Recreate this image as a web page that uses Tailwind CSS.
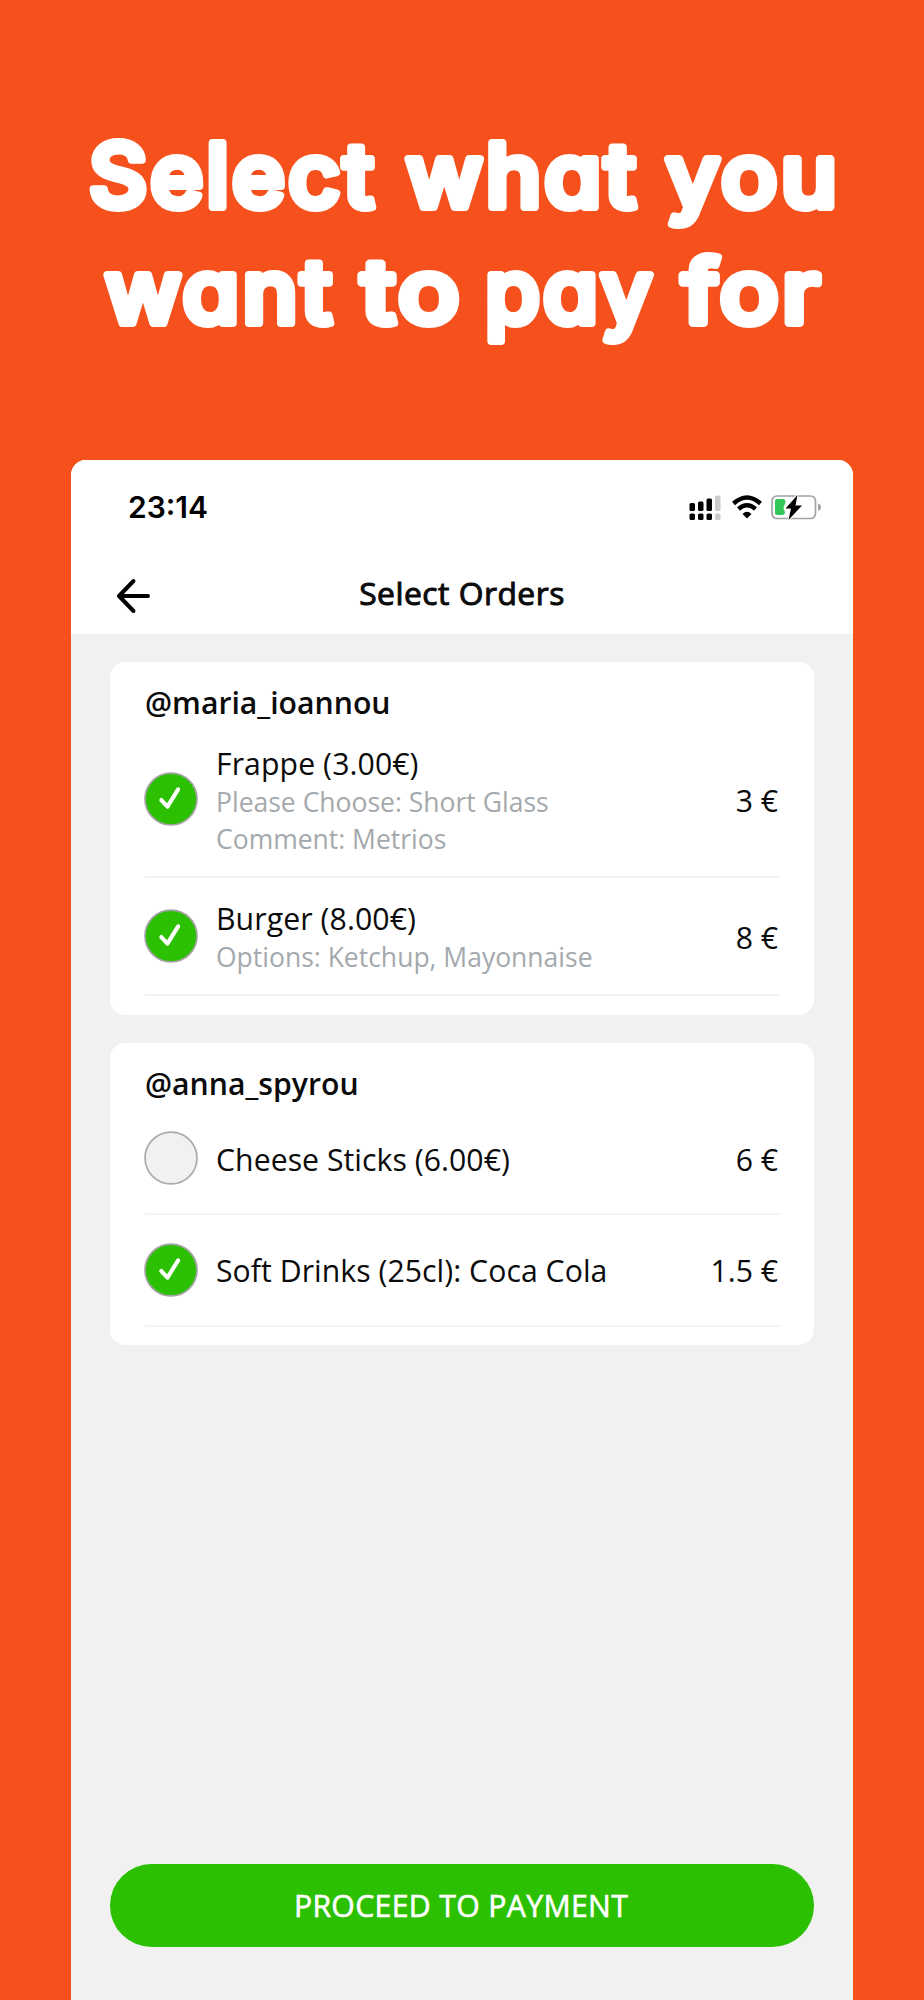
<!DOCTYPE html>
<html lang="en">
<head>
<meta charset="utf-8">
<title>Select Orders</title>
<script src="https://cdn.jsdelivr.net/npm/@tailwindcss/browser@4"></script>
</head>
<body class="bg-[#f6511d]">
<main class="flex h-[2000px] w-[924px] flex-col overflow-hidden bg-[#f6511d] font-['Open_Sans',sans-serif] text-[30.200px] text-[#0b0b0b]">
  <h1 class="h-[460px] shrink-0">
    <svg width="924" height="460" viewBox="0 0 924 460" class="fill-white stroke-white stroke-[8px] font-['Inter',sans-serif] text-[88px] font-medium tracking-[3px] [font-feature-settings:'cv11'] [stroke-linejoin:round]">
      <text x="89" y="206.500" textLength="288" lengthAdjust="spacingAndGlyphs">Select</text>
      <text x="406" y="206.500" textLength="233" lengthAdjust="spacingAndGlyphs">what</text>
      <text x="666" y="206.500" textLength="174" lengthAdjust="spacingAndGlyphs">you</text>
      <text x="105" y="322.500" textLength="230" lengthAdjust="spacingAndGlyphs">want</text>
      <text x="361" y="322.500" textLength="102" lengthAdjust="spacingAndGlyphs">to</text>
      <text x="485" y="322.500" textLength="170" lengthAdjust="spacingAndGlyphs">pay</text>
      <text x="682" y="322.500" textLength="141" lengthAdjust="spacingAndGlyphs">for</text>
    </svg>
  </h1>
  <section class="mx-[71px] flex grow flex-col overflow-hidden rounded-t-[15px] bg-[#f1f1f1]">
    <header class="h-[174px] shrink-0 bg-white">
      <div class="flex h-[94px] items-center justify-between pr-[31px] pl-[57px]">
        <span class="font-['Inter',sans-serif] text-[30px] font-semibold text-black">23:14</span>
        <svg width="133" height="26" viewBox="0 0 133 26" fill="none">
          <g fill="#000"><rect x="0.500" y="9" width="5.500" height="8" rx="1.500"/><rect x="9" y="7.500" width="5.500" height="9.500" rx="1.500"/><rect x="17.500" y="4.500" width="5.500" height="12.500" rx="1.500"/><rect x="0.500" y="19.500" width="5.500" height="6.500" rx="1.500"/><rect x="9" y="19.500" width="5.500" height="6.500" rx="1.500"/><rect x="17.500" y="19.500" width="5.500" height="6.500" rx="1.500"/></g>
          <g fill="#ccc"><rect x="26" y="1.500" width="5.500" height="15.500" rx="1.500"/><rect x="26" y="19.500" width="5.500" height="6.500" rx="1.500"/></g>
          <path d="M44.500 9.500Q58 -2.500 71.500 9.500M49.500 15Q58 7.500 66.500 15" stroke="#000" stroke-width="4.500"/>
          <path d="M53.500 20Q58 15.500 62.500 20L58 24.500Z" fill="#000"/>
          <rect x="83" y="2" width="43.500" height="22.500" rx="5" stroke="#a3a3a3" stroke-width="1.700"/>
          <path d="M129 9.500Q132 10.500 132 13.300T129 17Z" fill="#a3a3a3"/>
          <path d="M88 5H94Q96.500 5 96.500 8L94.500 14 96 18Q96 21 93 21H88Q86 21 86 19V7Q86 5 88 5Z" fill="#35c759"/>
          <path d="M108.500 1 96.500 14.500H102L99.500 26 113 11.500H106.500Z" fill="#000" stroke="#fff" stroke-width="2" paint-order="stroke"/>
        </svg>
      </div>
      <div class="grid h-[80px] grid-cols-[100px_1fr_100px] items-center">
        <svg class="mt-[3px] ml-[45px]" width="36" height="36" viewBox="0 0 36 36" fill="none" stroke="#000" stroke-width="4" stroke-linecap="round" stroke-linejoin="round"><path d="M17.500 3 3 18 17.500 33M3 18H32"/></svg>
        <h2 class="mt-[-3px] text-center text-[31.800px] font-normal tracking-[0.500px] [-webkit-text-stroke:1px_#0b0b0b]">Select Orders</h2>
      </div>
    </header>

    <article class="mx-[39px] mt-[28px] h-[353px] shrink-0 rounded-[15px] bg-white px-[35px]">
      <h3 class="h-[60px] pt-[20px] leading-[42px] font-semibold">@maria_ioannou</h3>
      <div class="flex h-[156px] items-center border-b-2 border-[#f3f3f3]">
        <svg class="mr-[18px] -ml-px shrink-0" width="54" height="54" viewBox="0 0 53 53" fill="none"><circle cx="26.500" cy="26.500" r="25.500" fill="#2bc002" stroke="#a3a3a3" stroke-width="1.700"/><path d="M17 27.500 23 34 33.500 17" stroke="#fff" stroke-width="4" stroke-linecap="round" stroke-linejoin="round"/></svg>
        <div class="grow pt-[3px] leading-[40px]"><p class="tracking-[0.100px]">Frappe (3.00€)</p><p class="text-[26.500px] leading-[37px] text-[#a4a9ad]">Please Choose: Short Glass</p><p class="text-[26.500px] leading-[37px] text-[#a4a9ad]">Comment: Metrios</p></div>
        <span class="pt-[3px] pr-px">3 €</span>
      </div>
      <div class="flex h-[118px] items-center border-b-2 border-[#f3f3f3]">
        <svg class="mr-[18px] -ml-px shrink-0" width="54" height="54" viewBox="0 0 53 53" fill="none"><circle cx="26.500" cy="26.500" r="25.500" fill="#2bc002" stroke="#a3a3a3" stroke-width="1.700"/><path d="M17 27.500 23 34 33.500 17" stroke="#fff" stroke-width="4" stroke-linecap="round" stroke-linejoin="round"/></svg>
        <div class="grow pt-[2px] leading-[40px]"><p class="tracking-[0.100px]">Burger (8.00€)</p><p class="text-[26.500px] leading-[37px] text-[#a4a9ad]">Options: Ketchup, Mayonnaise</p></div>
        <span class="pt-[3px] pr-px">8 €</span>
      </div>
    </article>

    <article class="mx-[39px] mt-[28px] h-[302px] shrink-0 rounded-[15px] bg-white px-[35px]">
      <h3 class="h-[60px] pt-[20px] leading-[42px] font-semibold">@anna_spyrou</h3>
      <div class="flex h-[112px] items-center border-b-2 border-[#f3f3f3]">
        <svg class="mr-[18px] -ml-px shrink-0" width="54" height="54" viewBox="0 0 53 53"><circle cx="26.500" cy="26.500" r="25.500" fill="#f1f1f1" stroke="#ababab" stroke-width="1.700"/></svg>
        <span class="grow pt-[4px] tracking-[0.050px]">Cheese Sticks (6.00€)</span>
        <span class="pt-[4px] pr-px">6 €</span>
      </div>
      <div class="flex h-[112px] items-center border-b-2 border-[#f3f3f3]">
        <svg class="mr-[18px] -ml-px shrink-0" width="54" height="54" viewBox="0 0 53 53" fill="none"><circle cx="26.500" cy="26.500" r="25.500" fill="#2bc002" stroke="#a3a3a3" stroke-width="1.700"/><path d="M17 27.500 23 34 33.500 17" stroke="#fff" stroke-width="4" stroke-linecap="round" stroke-linejoin="round"/></svg>
        <span class="grow pt-[2px] tracking-[0.050px]">Soft Drinks (25cl): Coca Cola</span>
        <span class="pt-[2px] pr-px">1.5 €</span>
      </div>
    </article>

    <button class="mx-[39px] mt-auto mb-[53px] h-[83px] shrink-0 rounded-full bg-[#2bc002] pr-[2px] tracking-[0.350px] text-white [-webkit-text-stroke:0.600px_white]">PROCEED TO PAYMENT</button>
  </section>
</main>
</body>
</html>
